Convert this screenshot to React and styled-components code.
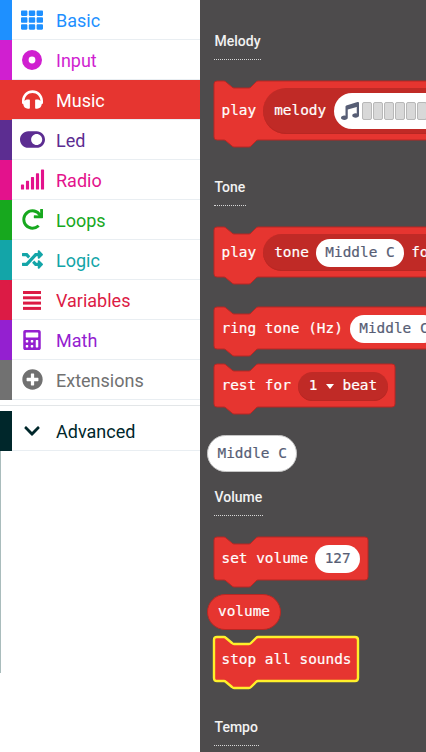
import React from "react";
import styled, { createGlobalStyle } from "styled-components";
import {
  FaTh,
  FaHeadphones,
  FaToggleOn,
  FaSignal,
  FaRedo,
  FaRandom,
  FaCalculator,
  FaPlusCircle,
  FaChevronDown,
  FaMusic,
} from "react-icons/fa";

const GlobalStyle = createGlobalStyle`
  html, body {
    margin: 0;
    padding: 0;
    overflow: hidden;
    background: #fff;
  }
`;

const RED = "#e63530";
const RED_DARK = "#c02a26";
const RED_EDGE = "#b82723";
const INK = "#575e75";
const MONO = `"DejaVu Sans Mono", "Liberation Mono", monospace`;

const Page = styled.div`
  display: flex;
  width: 426px;
  height: 752px;
  overflow: hidden;
`;

const Sidebar = styled.nav`
  width: 200px;
  flex: none;
  background: #fff;
  font-family: Roboto, "Liberation Sans", sans-serif;
`;

const Row = styled.div`
  display: flex;
  height: 40px;
  color: ${(p) => (p.$active ? "#fff" : p.$color)};
  background: ${(p) => (p.$active ? p.$color : "#fff")};
`;

const Stripe = styled.div`
  width: 12px;
  flex: none;
  background: ${(p) => p.$color};
`;

const RowBody = styled.div`
  flex: 1;
  display: flex;
  align-items: center;
  border-bottom: 1px solid #e9eef2;
  box-sizing: border-box;
`;

const IconSlot = styled.span`
  width: 40px;
  flex: none;
  display: flex;
  justify-content: center;
  margin-right: 4px;
  svg {
    width: ${(p) => p.$size || 20}px;
    height: ${(p) => p.$size || 20}px;
  }
`;

const RowLabel = styled.span`
  font-size: 18px;
  line-height: 20px;
  padding-top: 2px;
`;

const Divider = styled.div`
  height: 1px;
  margin: 5px 0;
  background: #e3e6e8;
`;

const EdgeLine = styled.div`
  width: 1px;
  height: 222px;
  background: #a9bcbc;
`;

const Flyout = styled.main`
  flex: 1;
  min-width: 0;
  background: #4d4b4c;
  overflow: hidden;
  display: flex;
  flex-direction: column;
  align-items: flex-start;
  padding-left: 14px;
`;

const Heading = styled.div`
  margin-top: ${(p) => p.$top}px;
  text-indent: 0.5px;
  font-family: Roboto, "Liberation Sans", sans-serif;
  font-size: 14px;
  font-weight: 500;
  line-height: 20px;
  color: #f2f2f2;
`;

const HeadingRule = styled.div`
  width: ${(p) => p.$width}px;
  margin-top: 8px;
  border-top: 1px dotted #d8d8d8;
`;

const BlockWrap = styled.div`
  position: relative;
  flex: none;
  width: ${(p) => p.$width}px;
  height: ${(p) => p.$height}px;
  margin-top: ${(p) => p.$top}px;
  box-sizing: border-box;
  display: flex;
  align-items: center;
  padding: 7px 0 6px 7.5px;
  gap: 7px;
  font-family: ${MONO};
  font-size: 14.4px;
  -webkit-text-stroke: 0.2px currentColor;
  color: #fff;
  white-space: nowrap;
`;

const BlockShape = styled.svg`
  position: absolute;
  left: 0;
  top: 0;
  overflow: visible;
`;

const BlockText = styled.span`
  position: relative;
  line-height: 17px;
  padding-bottom: 1px;
`;

const InnerPill = styled.div`
  position: relative;
  flex: none;
  display: flex;
  align-items: center;
  gap: ${(p) => p.$gap || 7}px;
  height: ${(p) => p.$height}px;
  box-sizing: border-box;
  padding: 0 ${(p) => p.$right || 8}px 0 11px;
  border-radius: ${(p) => p.$height / 2}px;
  background: ${RED_DARK};
  box-shadow: inset 0 -1px 0 ${RED_EDGE};
`;

const WhitePill = styled.div`
  position: relative;
  flex: none;
  display: flex;
  align-items: center;
  justify-content: center;
  height: ${(p) => p.$height}px;
  padding: 0 ${(p) => p.$pad || 9.5}px;
  border-radius: ${(p) => p.$height / 2}px;
  background: #fff;
  color: ${INK};
`;

const ReporterPill = styled(WhitePill)`
  flex: none;
  margin: ${(p) => p.$top}px 0 0 -7px;
  box-sizing: border-box;
  font-family: ${MONO};
  font-size: 14.4px;
  -webkit-text-stroke: 0.2px currentColor;
  border: 1px solid #c6c6c6;
`;

const VolumePill = styled(ReporterPill)`
  background: ${RED};
  color: #fff;
  border-color: ${RED_EDGE};
`;

const MelodyPill = styled(WhitePill)`
  justify-content: flex-start;
  padding: 0 30px 0 7px;
  svg {
    width: 18px;
    height: 18px;
    margin-right: 3px;
    color: ${INK};
  }
`;

const MelodyCell = styled.span`
  width: 10px;
  height: 18px;
  flex: none;
  margin-right: 1px;
  box-sizing: border-box;
  border-radius: 2px;
  background: #d8d8d8;
  border: 1px solid #b8b8b8;
`;

const Caret = styled.span`
  width: 0;
  height: 0;
  border-left: 4px solid transparent;
  border-right: 4px solid transparent;
  border-top: 5px solid #fff;
`;

// puzzle-piece outline: notch on top, tab hanging off the bottom
const blockPath = (w, h) => {
  const r = 3;
  return [
    `M ${r} 0`,
    "H 10 Q 11 0 12 1 L 18 6 Q 19 7 20 7 H 35 Q 36 7 37 6 L 42 1 Q 43 0 44 0",
    `H ${w - r} Q ${w} 0 ${w} ${r}`,
    `V ${h - r} Q ${w} ${h} ${w - r} ${h}`,
    `H 44 Q 43 ${h} 42 ${h + 1} L 37 ${h + 6} Q 36 ${h + 7} 35 ${h + 7}`,
    `H 20 Q 19 ${h + 7} 18 ${h + 6} L 12 ${h + 1} Q 11 ${h} 10 ${h}`,
    `H ${r} Q 0 ${h} 0 ${h - r}`,
    `V ${r} Q 0 0 ${r} 0 Z`,
  ].join(" ");
};

const Block = ({ width, height, top, highlight, children }) => (
  <BlockWrap $width={width} $height={height} $top={top}>
    <BlockShape width={width} height={height + 7}>
      <path
        d={blockPath(width, height)}
        fill={RED}
        stroke={highlight ? "#fff02a" : RED_EDGE}
        strokeWidth={highlight ? 2.4 : 1}
        strokeLinejoin="round"
      />
    </BlockShape>
    {children}
  </BlockWrap>
);

// solid disc with a small hole, the input category glyph
const DiscIcon = () => (
  <svg viewBox="0 0 20 20" fill="currentColor">
    <path fillRule="evenodd" d="M10 0a10 10 0 1 0 0 20a10 10 0 1 0 0-20zM10 6.6a3.4 3.4 0 1 1 0 6.8a3.4 3.4 0 1 1 0-6.8z" />
  </svg>
);

// four flat bars, the variables category glyph
const BarsIcon = () => (
  <svg viewBox="0 0 20 20" fill="currentColor">
    <rect x="1" y="1" width="18" height="3" />
    <rect x="1" y="6.3" width="18" height="3" />
    <rect x="1" y="11.6" width="18" height="3" />
    <rect x="1" y="16.9" width="18" height="3" />
  </svg>
);

const categories = [
  { label: "Basic", color: "#1e90ff", icon: FaTh, size: 22 },
  { label: "Input", color: "#d01fd0", icon: DiscIcon, size: 20 },
  { label: "Music", color: "#e63530", icon: FaHeadphones, size: 21, active: true },
  { label: "Led", color: "#5c2d91", icon: FaToggleOn, size: 25 },
  { label: "Radio", color: "#e3128c", icon: FaSignal, size: 25 },
  { label: "Loops", color: "#17a81e", icon: FaRedo, size: 21 },
  { label: "Logic", color: "#13a5a8", icon: FaRandom, size: 21 },
  { label: "Variables", color: "#dc1b45", icon: BarsIcon, size: 20 },
  { label: "Math", color: "#9420d0", icon: FaCalculator, size: 20 },
  { label: "Extensions", color: "#717171", icon: FaPlusCircle, size: 21 },
];

const Category = ({ item }) => {
  const Icon = item.icon;
  return (
    <Row $color={item.color} $active={item.active}>
      <Stripe $color={item.color} />
      <RowBody>
        <IconSlot $size={item.size}>
          <Icon />
        </IconSlot>
        <RowLabel>{item.label}</RowLabel>
      </RowBody>
    </Row>
  );
};

export default function App() {
  return (
    <>
      <GlobalStyle />
      <Page>
        <Sidebar>
          {categories.map((item) => (
            <Category key={item.label} item={item} />
          ))}
          <Divider />
          <Category
            item={{ label: "Advanced", color: "#00272b", icon: FaChevronDown, size: 18 }}
          />
          <EdgeLine />
        </Sidebar>
        <Flyout>
          <Heading $top={31}>Melody</Heading>
          <HeadingRule $width={47} />
          <Block width={300} height={59} top={21}>
            <BlockText>play</BlockText>
            <InnerPill $height={46} $gap={8}>
              <BlockText>melody</BlockText>
              <MelodyPill $height={36}>
                <FaMusic />
                {[0, 1, 2, 3, 4, 5, 6, 7].map((i) => (
                  <MelodyCell key={i} />
                ))}
              </MelodyPill>
            </InnerPill>
          </Block>
          <Heading $top={37}>Tone</Heading>
          <HeadingRule $width={32} />
          <Block width={300} height={50} top={21}>
            <BlockText>play</BlockText>
            <InnerPill $height={37}>
              <BlockText>tone</BlockText>
              <WhitePill $height={28}><BlockText>Middle C</BlockText></WhitePill>
              <BlockText>for</BlockText>
            </InnerPill>
          </Block>
          <Block width={300} height={42} top={30}>
            <BlockText>ring tone (Hz)</BlockText>
            <WhitePill $height={28}><BlockText>Middle C</BlockText></WhitePill>
          </Block>
          <Block width={181} height={43} top={15}>
            <BlockText>rest for</BlockText>
            <InnerPill $height={29} $gap={8.5} $right={11}>
              <BlockText>1</BlockText>
              <Caret />
              <BlockText>beat</BlockText>
            </InnerPill>
          </Block>
          <ReporterPill $height={37} $top={28} $pad={9.5}><BlockText>Middle C</BlockText></ReporterPill>
          <Heading $top={15}>Volume</Heading>
          <HeadingRule $width={49} />
          <Block width={154} height={43} top={21}>
            <BlockText>set volume</BlockText>
            <WhitePill $height={28}><BlockText>127</BlockText></WhitePill>
          </Block>
          <VolumePill $height={36} $top={14} $pad={10}><BlockText>volume</BlockText></VolumePill>
          <Block width={144} height={44} top={7} highlight>
            <BlockText>stop all sounds</BlockText>
          </Block>
          <Heading $top={36}>Tempo</Heading>
          <HeadingRule $width={45} />
        </Flyout>
      </Page>
    </>
  );
}
